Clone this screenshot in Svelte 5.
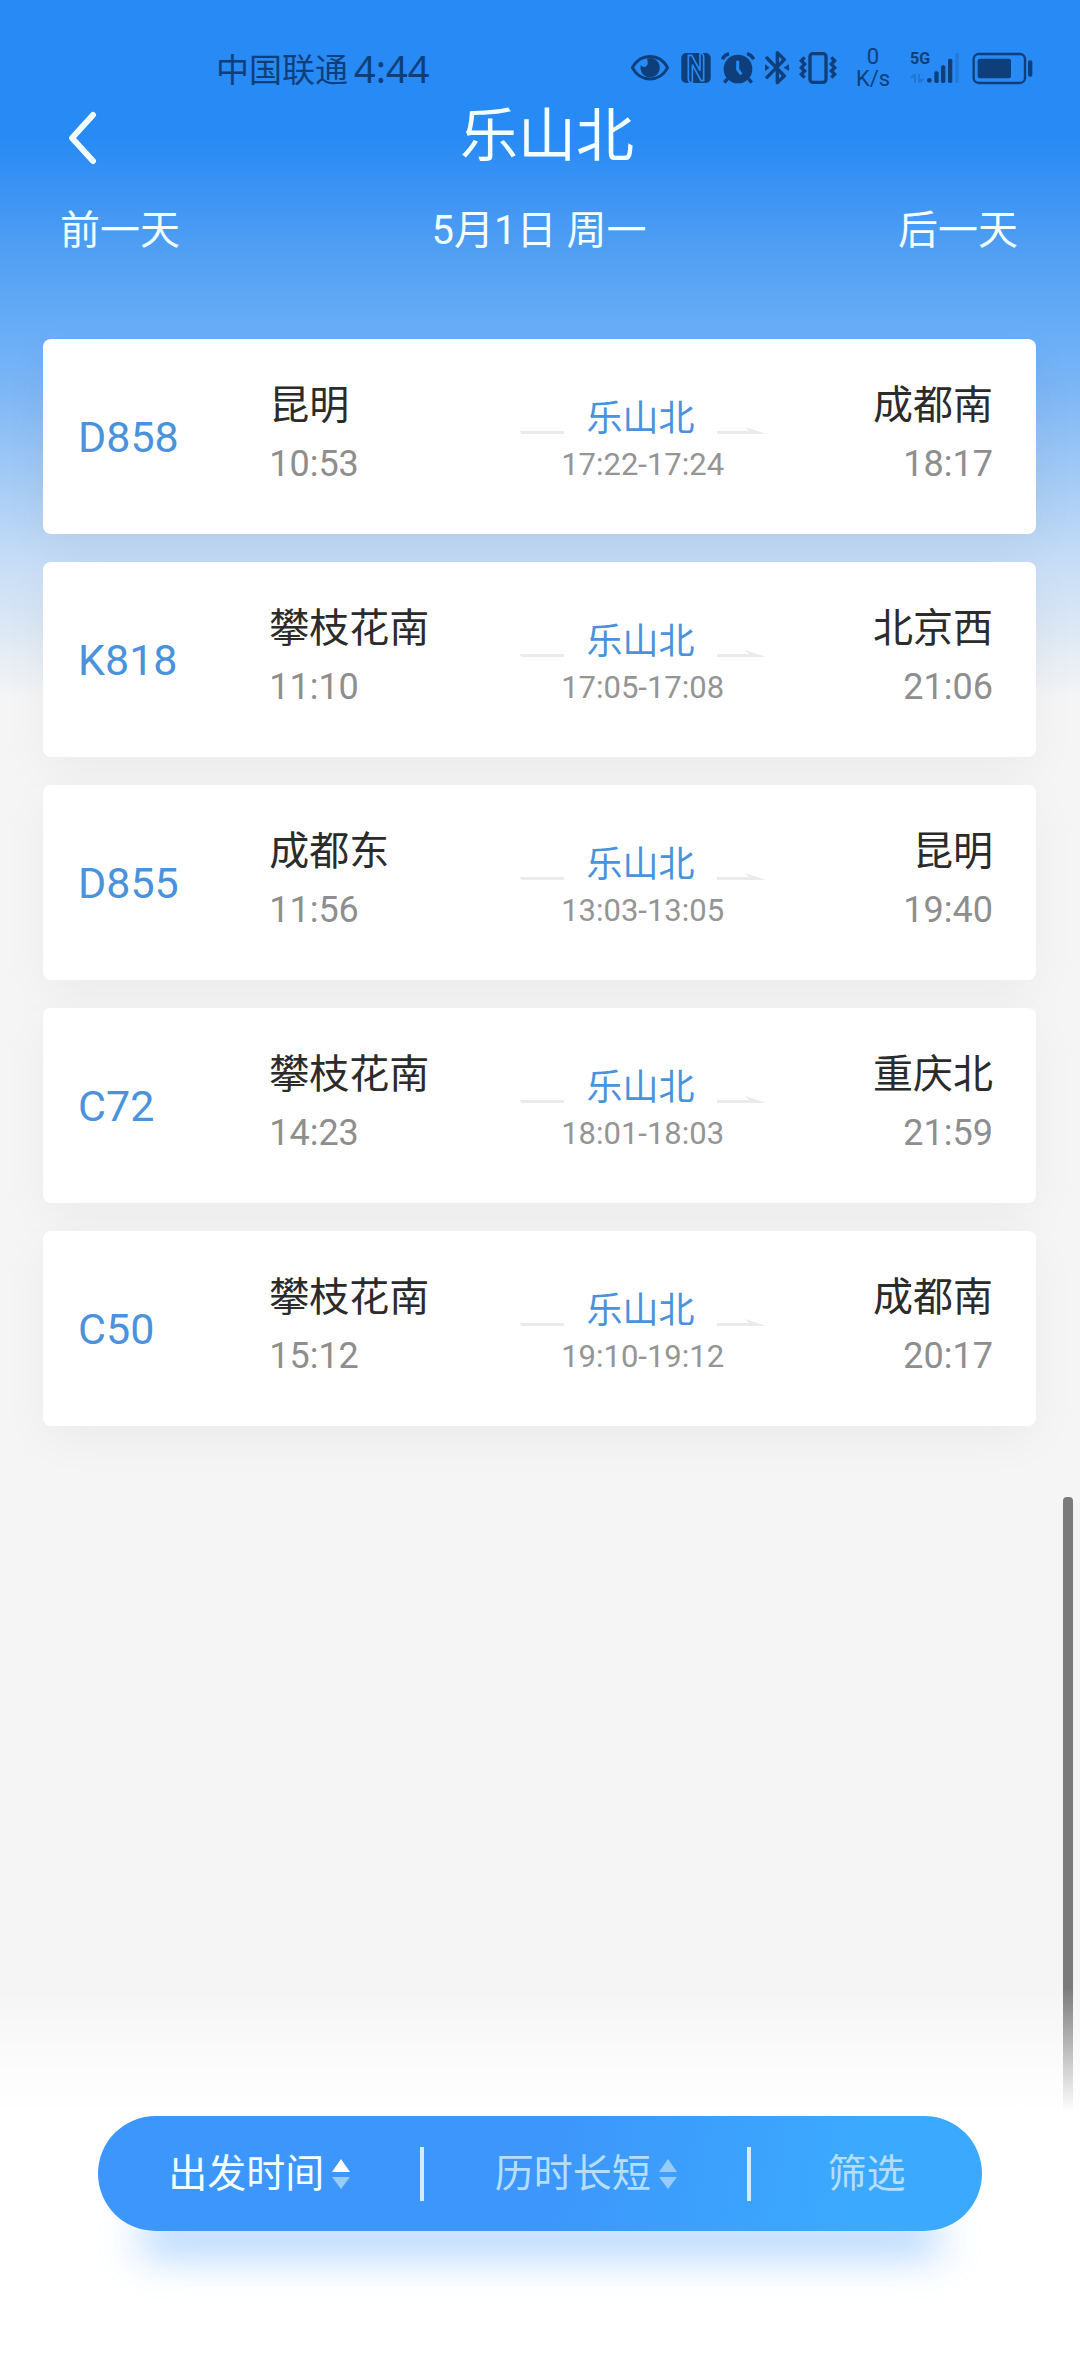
<!--
  StationBoard

  Trains stopping at one station on one day: date switcher on top,
  a card per train and the floating sort bar at the bottom.
-->

<script>
  const station = "乐山北";

  const trains = [
    { no: "D858", from: "昆明", dep: "10:53", stop: "17:22-17:24", to: "成都南", arr: "18:17" },
    { no: "K818", from: "攀枝花南", dep: "11:10", stop: "17:05-17:08", to: "北京西", arr: "21:06" },
    { no: "D855", from: "成都东", dep: "11:56", stop: "13:03-13:05", to: "昆明", arr: "19:40" },
    { no: "C72", from: "攀枝花南", dep: "14:23", stop: "18:01-18:03", to: "重庆北", arr: "21:59" },
    { no: "C50", from: "攀枝花南", dep: "15:12", stop: "19:10-19:12", to: "成都南", arr: "20:17" },
  ];

  let sortBy = $state("departure");
</script>

{#snippet arrows()}
  <svg class="arrows" viewBox="0 0 18 32" aria-hidden="true">
    <path class="up" d="M9 1 L18 14 H0 Z" />
    <path class="down" d="M0 19 H18 L9 31 Z" />
  </svg>
{/snippet}

<div class="page">
  <div class="status-bar">
    <span class="carrier">中国联通</span>
    <span class="clock">4:44</span>

    <div class="status-icons">
      <!-- Eye comfort -->
      <svg width="38" height="36" viewBox="0 0 114 108">
        <path d="M4 53 C28 8 86 8 110 53 C86 98 28 98 4 53 Z" fill="none" stroke="currentColor" stroke-width="9" />
        <path d="M57 24 A29 29 0 1 1 29 46 Q37 54 44 50 Q54 43 48 26 Z" fill="currentColor" />
      </svg>
      <!-- NFC -->
      <svg class="nfc" width="30" height="36" viewBox="0 0 90 108">
        <rect x="1" y="9" width="88" height="90" rx="15" fill="currentColor" />
        <path d="M34 99 Q22 99 22 86 V16 H32 L57 62 V9 M56 9 Q68 9 68 22 V92 H60 L34 44 V99" class="cut" />
      </svg>
      <!-- Alarm -->
      <svg class="alarm" width="34" height="36" viewBox="0 0 102 108">
        <circle cx="51" cy="57" r="43" fill="currentColor" />
        <path d="M4 28 Q10 15 24 11 M78 11 Q92 15 98 28 M20 86 L10 98 M82 86 L92 98" fill="none" stroke="currentColor" stroke-width="10" />
        <path d="M50 32 V58 L61 73" class="cut hand" />
      </svg>
      <!-- Bluetooth -->
      <svg class="bluetooth" width="24" height="36" viewBox="0 0 72 108">
        <path d="M6 24 L58 78 L37 98 V8 L58 29 L6 82" fill="none" stroke="currentColor" stroke-width="10" stroke-linejoin="round" stroke-linecap="round" />
        <path d="M0 43 L14 53 L0 63 Z M72 43 L56 53 L72 63 Z" fill="currentColor" />
      </svg>
      <!-- Vibrate -->
      <svg class="vibrate" width="38" height="36" viewBox="0 0 114 108">
        <g fill="none" stroke="currentColor" stroke-width="10">
          <rect x="33" y="11" width="48" height="86" rx="9" />
          <path d="M17 22 L7 32 L17 42 L7 53 L17 63 L7 73 L17 83" />
          <path d="M97 22 L107 32 L97 42 L107 53 L97 63 L107 73 L97 83" />
        </g>
      </svg>
      <span class="speed"><span>0</span><span>K/s</span></span>
      <!-- Mobile signal -->
      <span class="signal">
        <span class="net">5G</span>
        <svg width="50" height="36" viewBox="0 0 150 108">
          <g fill="currentColor">
            <circle cx="58" cy="91" r="7" />
            <rect x="73" y="64" width="13" height="35" rx="5" />
            <rect x="93" y="46" width="13" height="53" rx="5" />
            <rect x="114" y="26" width="13" height="73" rx="5" />
            <rect x="136" y="8" width="10" height="91" rx="4" opacity="0.2" />
            <path d="M2 80 L12 72 H18 V98 H12 V84 H2 Z M24 72 H30 V86 H44 L32 98 H24 Z" opacity="0.25" />
          </g>
        </svg>
      </span>
      <!-- Battery -->
      <svg class="battery" width="61" height="36" viewBox="0 0 183 108">
        <rect x="5" y="12" width="154" height="87" rx="15" fill="none" stroke="currentColor" stroke-width="7" />
        <rect x="17" y="26" width="100" height="59" rx="6" fill="currentColor" />
        <rect x="168" y="31" width="13" height="49" rx="6" fill="currentColor" />
      </svg>
    </div>
  </div>

  <header class="title-bar">
    <button class="back" aria-label="返回">
      <svg width="32" height="56" viewBox="0 0 32 56" aria-hidden="true">
        <path d="M27 5 L6 28 L27 51" />
      </svg>
    </button>
    <h1>{station}</h1>
  </header>

  <nav class="dates">
    <button>前一天</button>
    <span>5月1日 周一</span>
    <button>后一天</button>
  </nav>

  <main class="trains">
    {#each trains as train (train.no)}
      <a class="card" href="#{train.no}">
        <span class="number">{train.no}</span>
        <span class="end">
          <span class="name">{train.from}</span>
          <span class="time">{train.dep}</span>
        </span>
        <span class="stop">
          <span class="via">
            <svg width="45" height="12" viewBox="0 0 45 12" aria-hidden="true">
              <path d="M0 8 H45 V11 H3 Z" />
            </svg>
            <span>{station}</span>
            <svg width="49" height="12" viewBox="0 0 49 12" aria-hidden="true">
              <path d="M0 8 H32 L28 4 L49 11 H0 Z" />
            </svg>
          </span>
          <span class="stop-time">{train.stop}</span>
        </span>
        <span class="end right">
          <span class="name">{train.to}</span>
          <span class="time">{train.arr}</span>
        </span>
      </a>
    {/each}
  </main>

  <div class="scrollbar"></div>

  <footer>
    <div class="sort-bar">
      <button
        class="sort"
        class:active={sortBy === "departure"}
        onclick={() => (sortBy = "departure")}
      >
        出发时间{@render arrows()}
      </button>
      <button
        class="sort"
        class:active={sortBy === "duration"}
        onclick={() => (sortBy = "duration")}
      >
        历时长短{@render arrows()}
      </button>
      <button class="sort filter">筛选</button>
    </div>
  </footer>
</div>

<style>
  :global(body) {
    margin: 0;
    background: #f5f5f5;
  }

  .page {
    position: relative;
    display: flex;
    flex-direction: column;
    min-height: 100vh;
    font-family: Roboto, "Noto Sans CJK SC", sans-serif;
    background: linear-gradient(
      180deg,
      #278af5 0,
      #278af5 136px,
      #3f95f3 200px,
      #5ba5f3 284px,
      #69aef7 335px,
      #7db6f5 390px,
      #a9cdf5 490px,
      #c6dcf6 560px,
      #dde8f4 630px,
      #f5f5f5 700px
    );
  }

  button {
    padding: 0;
    border: 0;
    background: none;
    color: inherit;
    font: inherit;
    cursor: pointer;
  }

  svg {
    display: block;
    flex: none;
  }

  /* Status bar */
  .status-bar {
    display: flex;
    align-items: center;
    height: 64px;
    padding: 36px 47px 0 216px;
    color: #0f3f7a;
  }

  .carrier {
    font-size: 33px;
  }

  .clock {
    margin-left: 6px;
    font-family: "Noto Sans", sans-serif;
    font-size: 38px;
  }

  .status-icons {
    display: flex;
    align-items: center;
    margin-left: auto;
  }

  .cut {
    fill: none;
    stroke: #278af5;
    stroke-width: 5;
  }

  .hand {
    stroke-width: 9;
  }

  .nfc {
    margin-left: 12px;
  }

  .alarm,
  .bluetooth,
  .vibrate {
    margin-left: 10px;
  }

  .speed {
    display: flex;
    flex-direction: column;
    align-items: center;
    width: 36px;
    margin-left: 18px;
    font-size: 22px;
    line-height: 22px;
  }

  .signal {
    position: relative;
    margin-left: 19px;
  }

  .net {
    position: absolute;
    top: 0;
    left: 0;
    font-size: 16px;
    font-weight: 700;
    line-height: 18px;
  }

  .battery {
    margin-left: 12px;
  }

  /* Title and date switcher */
  .title-bar {
    position: relative;
    display: flex;
    align-items: center;
    justify-content: center;
    height: 72px;
    padding-left: 14px;
    color: #f4ffff;
  }

  .back {
    position: absolute;
    left: 66px;
    top: 10px;
  }

  .back path {
    fill: none;
    stroke: #f2ffff;
    stroke-width: 6;
    stroke-linecap: round;
    stroke-linejoin: round;
  }

  h1 {
    margin: 0;
    font-size: 58px;
    font-weight: 400;
    line-height: 72px;
  }

  .dates {
    display: grid;
    grid-template-columns: 1fr auto 1fr;
    padding: 31px 62px 0 60px;
    color: #f4ffff;
    font-size: 40px;
    line-height: 56px;
  }

  .dates button:first-child {
    justify-self: start;
  }

  .dates button:last-child {
    justify-self: end;
  }

  /* Train cards */
  .trains {
    display: flex;
    flex-direction: column;
    gap: 28px;
    padding: 80px 44px 0 43px;
  }

  .card {
    display: grid;
    grid-template-columns: 191fr 250fr 246fr 227fr;
    align-items: start;
    min-height: 195px;
    padding: 0 43px 0 35px;
    box-sizing: border-box;
    border-radius: 8px;
    background: #fff;
    box-shadow: 0 14px 48px rgba(0, 0, 0, 0.045);
    text-decoration: none;
  }

  .number {
    align-self: center;
    color: #4a92dc;
    font-size: 43px;
    line-height: 48px;
  }

  .end {
    display: flex;
    flex-direction: column;
    gap: 16px;
    padding-top: 45px;
    white-space: nowrap;
  }

  .right {
    align-items: flex-end;
  }

  .name {
    color: #2b2b2b;
    font-size: 40px;
    line-height: 44px;
  }

  .time {
    color: #8e8e8e;
    font-size: 36px;
    line-height: 40px;
  }

  .stop {
    display: flex;
    flex-direction: column;
    gap: 4px;
    padding-top: 58px;
    text-align: center;
    white-space: nowrap;
  }

  .via {
    display: flex;
    align-items: center;
    justify-content: space-between;
    color: #4a92dc;
    font-size: 36px;
    line-height: 44px;
  }

  .via svg {
    align-self: flex-end;
    margin-bottom: 6px;
    fill: #ebebeb;
  }

  .stop-time {
    color: #959595;
    font-size: 31px;
    line-height: 40px;
  }

  .scrollbar {
    position: absolute;
    right: 7px;
    bottom: 261px;
    width: 10px;
    height: 26vh;
    border-radius: 4px;
    background: #7b7b7b;
  }

  /* Sort bar, the list fades out behind it */
  footer {
    position: sticky;
    bottom: 0;
    margin-top: auto;
    padding: 128px 98px 145px;
    background: linear-gradient(180deg, rgba(255, 255, 255, 0) 0, #fff 124px);
  }

  .sort-bar {
    display: flex;
    align-items: center;
    height: 115px;
    border-radius: 58px;
    background: linear-gradient(100deg, #3d96fb 50%, #3ba9fe 85%);
    box-shadow: 0 64px 40px -40px rgba(61, 150, 251, 0.44);
  }

  .sort {
    display: flex;
    flex: 325;
    align-items: center;
    justify-content: center;
    gap: 8px;
    color: #b5defe;
    font-size: 39px;
    line-height: 54px;
    white-space: nowrap;
  }

  .sort + .sort {
    border-left: 4px solid #d3ecfb;
    height: 54px;
  }

  .filter {
    flex: 233;
  }

  .active {
    color: #f4ffff;
  }

  .arrows {
    width: 18px;
    height: 32px;
    fill: #96cbfd;
  }

  .active .up {
    fill: #fff;
  }
</style>
